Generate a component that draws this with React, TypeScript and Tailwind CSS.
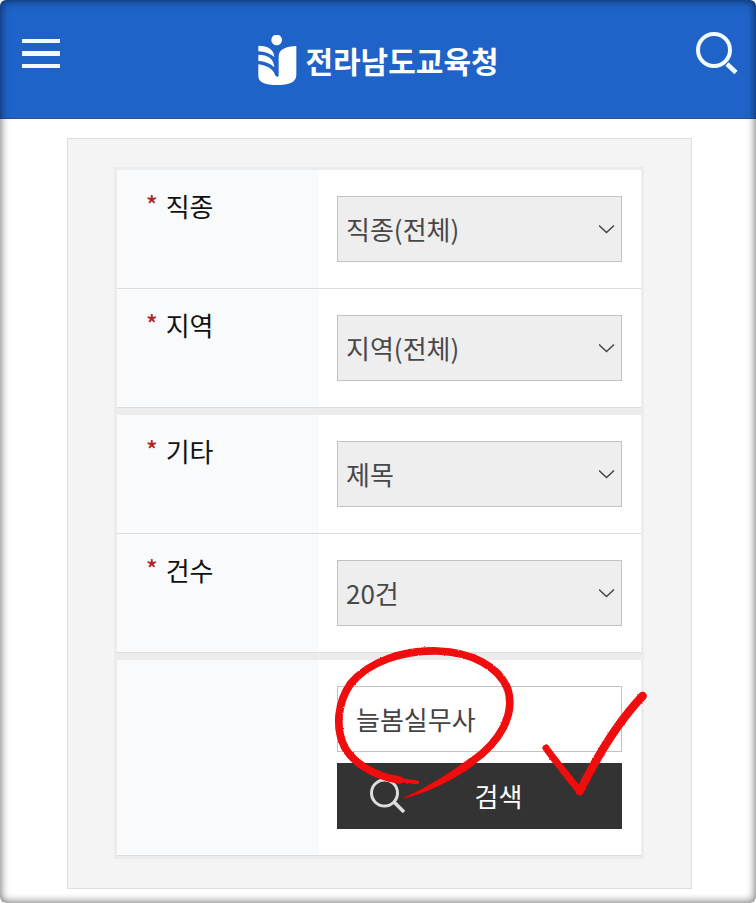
import { useState } from 'react';

const filters = [
  [
    { id: 'job', label: '직종', options: ['직종(전체)', '교육공무직', '기간제교원'] },
    { id: 'region', label: '지역', options: ['지역(전체)', '목포', '여수', '순천'] },
  ],
  [
    { id: 'etc', label: '기타', options: ['제목', '내용'] },
    { id: 'count', label: '건수', options: ['20건', '50건', '100건'] },
  ],
];

function Logo() {
  return (
    <a href="#" className="mt-1 flex items-center gap-2 text-white">
      <svg className="h-[50px] w-10" viewBox="0 0 120 150" fill="currentColor" aria-hidden="true">
        <circle cx="59" cy="15" r="16" />
        <path d="M118 33C88 34 65 43 65 64V120C65 128 56 127 53 117C48 102 29 91 4 88V122C4 143 26 150 60 150C96 150 118 142 118 119Z" />
        <path d="M4 32C32 32 51 43 52 66C40 56 25 50 4 49Z" />
        <path d="M4 59C32 59 51 71 52 97C40 86 25 79 4 78Z" />
      </svg>
      <span className="text-[30px] leading-10 font-bold">전라남도교육청</span>
    </a>
  );
}

function Header() {
  return (
    <header className="grid grid-cols-[auto_1fr_auto] items-start justify-items-center border-b border-[#2b5189] bg-[#1f63c9] pt-[31px] pr-[18px] pb-[33px] pl-[22px]">
      <button type="button" aria-label="메뉴" className="flex h-11 w-[38px] flex-col justify-center gap-2">
        <span className="h-1 w-full bg-[#f2fbff]" />
        <span className="h-[5px] w-full bg-[#f2fbff]" />
        <span className="h-1 w-full bg-[#f2fbff]" />
      </button>
      <Logo />
      <button type="button" aria-label="검색창 열기" className="text-[#f2fbff]">
        <svg className="h-11 w-[42px]" viewBox="0 0 42 44" fill="none" stroke="currentColor" strokeWidth="4">
          <circle cx="18" cy="19" r="16" />
          <path d="M31 33L40 41.500" strokeWidth="4.500" />
        </svg>
      </button>
    </header>
  );
}

function SelectRow({ id, label, options }: { id: string; label: string; options: string[] }) {
  return (
    <div className="grid grid-cols-[202px_1fr] border-b border-[#dcdcdc] bg-white">
      <label htmlFor={id} className="flex items-start gap-2 bg-[#f9fafc] pt-[18px] pl-[29px] text-[26px] leading-9 text-[#111]">
        <span className="text-2xl leading-8 font-medium text-[#b32525]">*</span>
        {label}
      </label>
      <div className="relative py-[26px] pr-[19px] pl-[18px]">
        <select
          id={id}
          className="h-[66px] w-full appearance-none border border-[#c2c2c2] bg-[#eee] pb-0.5 pl-2 text-[26px] text-[#484848]"
        >
          {options.map((o) => (
            <option key={o}>{o}</option>
          ))}
        </select>
        <svg
          className="pointer-events-none absolute top-1/2 right-[26px] h-4 w-4 -translate-y-1/2"
          viewBox="0 0 16 16"
          fill="none"
          stroke="#444"
          strokeWidth="1.500"
        >
          <path d="M0 4.500L7.500 11.500L15 4.500" />
        </svg>
      </div>
    </div>
  );
}

// hand-drawn red circle and check over the keyword box
function PenMarks() {
  return (
    <svg
      className="pointer-events-none absolute -top-[46px] -left-[17px] h-40 w-[340px] max-w-none"
      viewBox="0 0 1020 480"
      fill="none"
      stroke="#f00808"
      strokeLinecap="round"
      strokeLinejoin="round"
      aria-hidden="true"
    >
      <filter id="crayon" x="-5%" y="-5%" width="110%" height="110%">
        <feTurbulence type="fractalNoise" baseFrequency="0.4" numOctaves="2" seed="4" />
        <feDisplacementMap in="SourceGraphic" scale="6" xChannelSelector="R" yChannelSelector="G" />
      </filter>
      <g filter="url(#crayon)">
        <path
          d="M238 420C160 407 101 369 74 322C44 260 54 186 91 132C145 65 250 30 352 33C455 36 535 79 563 146C587 222 541 305 455 365"
          strokeWidth="23"
        />
        <path d="M190 411C225 419 258 423 291 427" strokeWidth="13" />
        <path d="M448 356C400 390 350 428 252 474C318 460 400 420 463 374Z" fill="#f00808" strokeWidth="2" />
        <path d="M678 324C711 371 748 413 779 454" strokeWidth="21" />
        <path d="M779 454C831 350 895 244 968 168" strokeWidth="25" />
      </g>
    </svg>
  );
}

function KeywordRow() {
  const [keyword, setKeyword] = useState('늘봄실무사');

  return (
    <div className="grid grid-cols-[202px_1fr] border-b border-[#dcdcdc] bg-white">
      <div className="bg-[#f9fafc]" />
      <div className="py-[26px] pr-[19px] pl-[18px]">
        <div className="relative flex flex-col gap-[11px]">
          <input
            type="text"
            aria-label="검색어"
            value={keyword}
            onChange={(e) => setKeyword(e.target.value)}
            className="h-[66px] w-full border border-[#c2c2c2] bg-white px-[18px] pb-0.5 text-[26px] text-[#444]"
          />
          <button type="submit" className="flex h-[66px] items-center bg-[#333] pb-0.5 pl-8 text-[26px] text-white">
            <svg className="h-9 w-9" viewBox="0 0 36 36" fill="none" stroke="#ddd" strokeWidth="3">
              <circle cx="15.500" cy="16" r="13" />
              <path d="M25 25L35 35" strokeWidth="3.500" />
            </svg>
            <span className="flex-1 pr-[30px]">검색</span>
          </button>
          <PenMarks />
        </div>
      </div>
    </div>
  );
}

export default function App() {
  return (
    <div className="bg-white">
      <div className="relative min-h-screen overflow-hidden rounded-md bg-white font-['Noto_Sans_CJK_KR',sans-serif]">
        <Header />
        <main className="mt-[19px] mr-16 mb-3.5 ml-[67px] border border-[#dedede] bg-[#f4f4f4] pt-7 pr-[47px] pb-[29px] pl-[46px]">
          <form
            onSubmit={(e) => e.preventDefault()}
            className="flex flex-col gap-[7px] border-3 border-[#ececec] bg-[#ececec]"
          >
            {filters.map((group) => (
              <div key={group[0].id}>
                {group.map((f) => (
                  <SelectRow key={f.id} {...f} />
                ))}
              </div>
            ))}
            <KeywordRow />
          </form>
        </main>
        <div className="pointer-events-none absolute inset-0 rounded-md shadow-[inset_0_0_9px_1px_rgba(0,0,0,0.55)]" />
      </div>
    </div>
  );
}
